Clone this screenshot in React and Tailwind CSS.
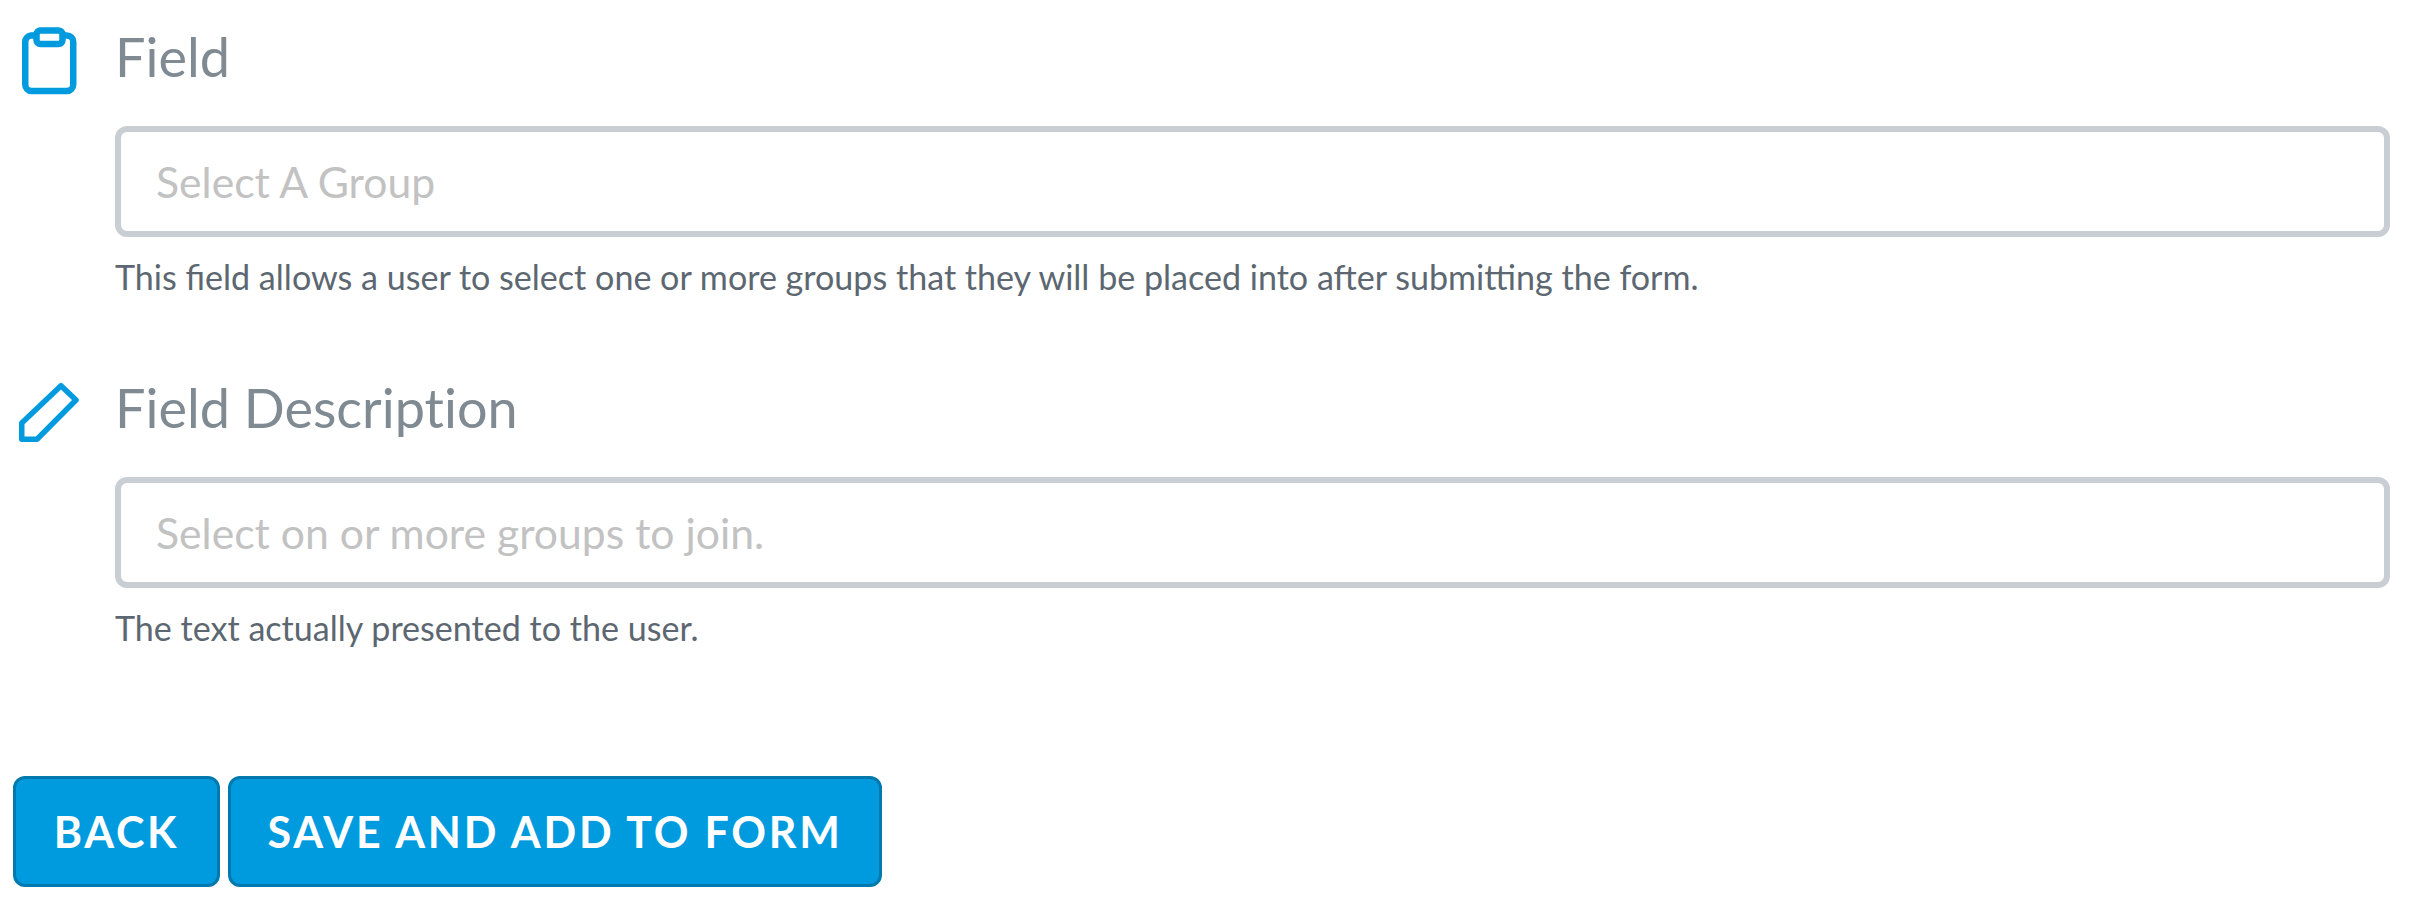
import React from 'react';

const ClipboardIcon = () => (
    <svg width="56" height="68" viewBox="0 0 56 68" fill="none" stroke="#009bdf" strokeWidth="6.5" strokeLinejoin="round">
        <path d="M14 8.500H10A6.500 6.500 0 0 0 4.250 15v42.500a6.500 6.500 0 0 0 6.500 6.500h35a6.500 6.500 0 0 0 6.500-6.500V15a6.500 6.500 0 0 0-6.500-6.500H41" />
        <rect x="15.500" y="3.500" width="26" height="13.500" rx="4" />
    </svg>
);

const PencilIcon = () => (
    <svg width="60" height="60" viewBox="0 0 60 60" fill="none" stroke="#009bdf" strokeWidth="5.5" strokeLinejoin="round">
        <path d="M2.750 57.250V41L42 3.750 57 18 18 57.250Z" />
    </svg>
);

const FieldSection = ({ icon, title, placeholder, help, className }) => (
    <section className={`flex ${className}`}>
        <div className="w-[115px] shrink-0">{icon}</div>
        <div className="flex-1 min-w-0">
            <h2 className="text-[54px] leading-[60px] text-[#7f8a92] font-normal mb-[39px] [font-variant-ligatures:none]">{title}</h2>
            <input
                type="text"
                placeholder={placeholder}
                className="block w-full h-[111px] border-[6px] border-[#c8ced4] rounded-[12px] bg-white pl-[35px] text-[42.7px] outline-none placeholder:text-[#c2c2c2] placeholder:opacity-100"
            />
            <p className="mt-[20px] text-[34.1px] leading-[40px] text-[#5c6771]">{help}</p>
        </div>
    </section>
);

const App = () => {
    return (
        <div className="w-full h-[906px] overflow-hidden bg-white pr-[22px] font-['Lato',sans-serif]">
            <div className="pt-[27px]">
                <FieldSection
                    icon={<div className="pl-[21px]"><ClipboardIcon /></div>}
                    title="Field"
                    placeholder="Select A Group"
                    help="This field allows a user to select one or more groups that they will be placed into after submitting the form."
                />
                <FieldSection
                    className="mt-[81px]"
                    icon={<div className="pl-[19px] pt-[4px]"><PencilIcon /></div>}
                    title="Field Description"
                    placeholder="Select on or more groups to join."
                    help="The text actually presented to the user."
                />
            </div>
            <div className="flex gap-[8px] pl-[13px] mt-[128px]">
                <button className="h-[111px] w-[207px] pt-[2px] rounded-[12px] border-[3px] border-[#0079ad] bg-[#009bdf] text-white font-bold text-[43px] tracking-[2.75px]">BACK</button>
                <button className="h-[111px] w-[654px] pt-[2px] rounded-[12px] border-[3px] border-[#0079ad] bg-[#009bdf] text-white font-bold text-[43px] tracking-[2.75px]">SAVE AND ADD TO FORM</button>
            </div>
        </div>
    );
};

export default App;
